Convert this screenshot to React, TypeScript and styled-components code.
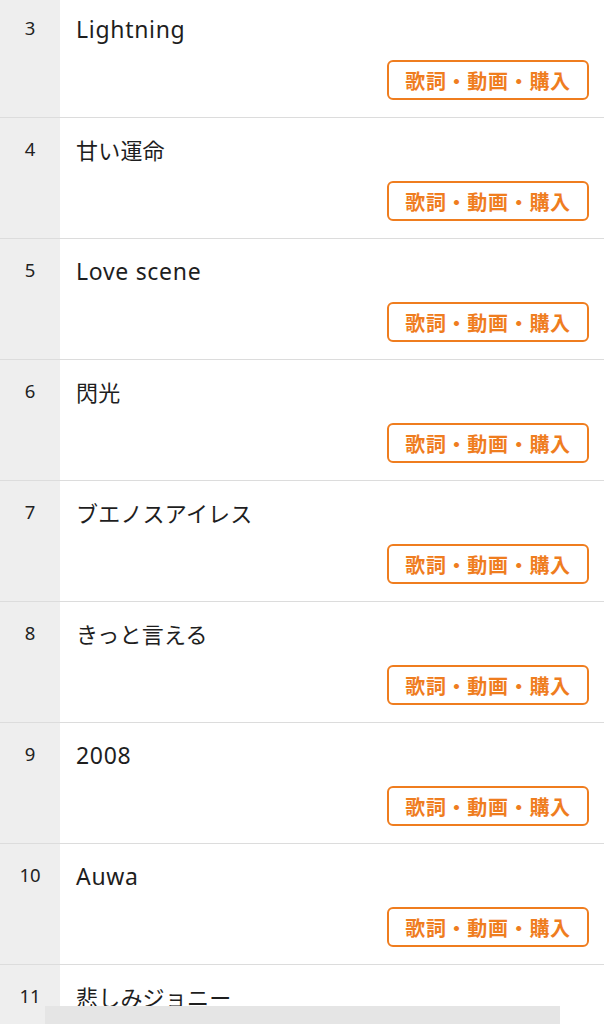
import React from "react";
import styled, { createGlobalStyle } from "styled-components";

const Global = createGlobalStyle`
  html, body { margin: 0; padding: 0; background: #fff; }
  body {
    font-family: "Noto Sans", "Noto Sans CJK JP", sans-serif;
    color: #222;
    overflow: hidden;
  }
`;

const List = styled.ul`
  list-style: none;
  margin: -3px 0 0 0;
  padding: 0;
  width: 604px;
`;

const Row = styled.li`
  display: grid;
  grid-template-columns: 60px 1fr;
  height: 120px;
  border-bottom: 1px solid #dcdcdc;
`;

const Num = styled.div`
  background: #eeeeee;
  text-align: center;
  padding-top: 18px;
  font-size: 18.5px;
  line-height: 26px;
  color: #222;
  font-family: "Noto Sans", "Noto Sans CJK JP", sans-serif;
`;

const Body = styled.div`
  display: flex;
  flex-direction: column;
  align-items: flex-start;
  padding: 15px 15px 0 16px;
`;

const Title = styled.div<{ $latin?: boolean }>`
  font-size: ${(p) => (p.$latin ? "23px" : "22px")};
  letter-spacing: ${(p) => (p.$latin ? "0.7px" : "0.2px")};
  line-height: 34px;
  color: #1e1e1e;
  font-family: "Noto Sans", "Noto Sans CJK JP", sans-serif;
`;

const Button = styled.a`
  align-self: flex-end;
  margin-top: 14px;
  box-sizing: border-box;
  width: 202px;
  height: 40px;
  border: 2.5px solid #ef7d1f;
  border-radius: 6px;
  display: flex;
  align-items: center;
  justify-content: center;
  color: #ef7d1f;
  font-family: "Noto Sans CJK JP", sans-serif;
  font-weight: 700;
  font-size: 20px;
  letter-spacing: 0.7px;
  text-decoration: none;
`;

const BottomBar = styled.div`
  position: fixed;
  left: 45px;
  bottom: 0;
  width: 515px;
  height: 18px;
  background: #e5e5e5;
`;

const songs: [number, string][] = [
  [3, "Lightning"],
  [4, "甘い運命"],
  [5, "Love scene"],
  [6, "閃光"],
  [7, "ブエノスアイレス"],
  [8, "きっと言える"],
  [9, "2008"],
  [10, "Auwa"],
  [11, "悲しみジョニー"],
];

const isLatin = (s: string) => /^[\x00-\x7f]+$/.test(s);

export default function App() {
  return (
    <>
      <Global />
      <List>
        {songs.map(([n, t]) => (
          <Row key={n}>
            <Num>{n}</Num>
            <Body>
              <Title $latin={isLatin(t)}>{t}</Title>
              <Button>歌詞・動画・購入</Button>
            </Body>
          </Row>
        ))}
      </List>
      <BottomBar />
    </>
  );
}
